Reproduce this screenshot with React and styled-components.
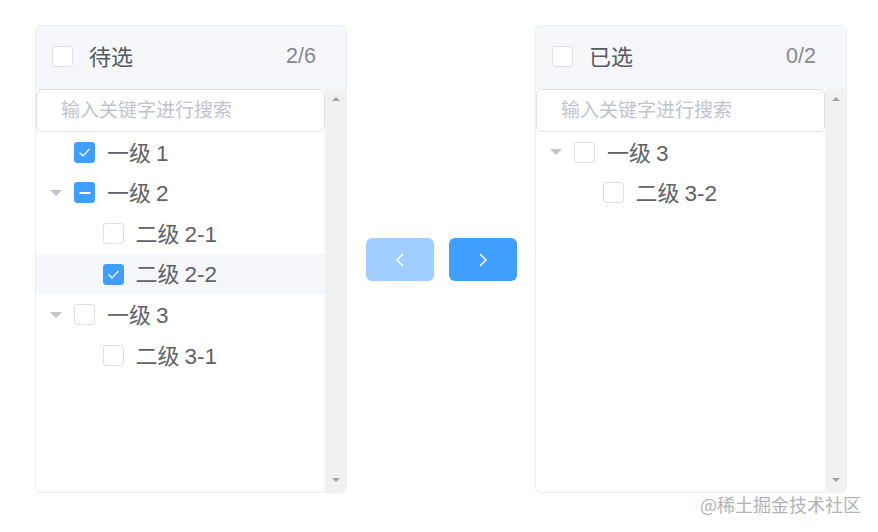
import React from "react";
import styled, { createGlobalStyle, css } from "styled-components";

const Global = createGlobalStyle`
  html, body { margin: 0; padding: 0; background: #ffffff; }
  body { font-family: "Liberation Sans", "Noto Sans CJK SC", sans-serif; }
  * { box-sizing: border-box; }
`;

const Page = styled.div`
  position: relative;
  width: 878px;
  height: 532px;
  padding: 25px 0 0 35px;
  display: flex;
  align-items: flex-start;
`;

const Panel = styled.div`
  width: 312px;
  height: 468px;
  border: 1px solid #ebeef5;
  border-radius: 6px;
  background: #fff;
  overflow: hidden;
  display: flex;
  flex-direction: column;
`;

const Header = styled.div`
  height: 63px;
  background: #f5f7fa;
  display: flex;
  align-items: center;
  padding: 0 30px 2px 16px;
  flex-shrink: 0;
`;

const HeaderTitle = styled.span`
  margin-left: 16px;
  font-size: 22px;
  line-height: 1;
  padding-bottom: 3px;
  color: #57595e;
  font-family: "Noto Sans CJK SC", sans-serif;
  flex: 1;
`;

const Count = styled.span`
  font-size: 21.5px;
  line-height: 1;
  color: #85888e;
  font-family: "Liberation Sans", sans-serif;
`;

const Body = styled.div`
  flex: 1;
  display: flex;
  min-height: 0;
`;

const Content = styled.div`
  flex: 1;
  display: flex;
  flex-direction: column;
`;

const Search = styled.div`
  height: 43px;
  border: 1px solid #dcdfe6;
  border-radius: 6px;
  display: flex;
  align-items: center;
  padding: 0 0 4px 24px;
  font-size: 19px;
  line-height: 1;
  color: #c0c4cc;
  font-family: "Noto Sans CJK SC", sans-serif;
  margin-right: 0;
`;

const Scrollbar = styled.div`
  width: 21px;
  background: #f1f1f1;
  display: flex;
  flex-direction: column;
  justify-content: space-between;
  align-items: center;
  padding: 8px 0 10px;
`;

const Arrow = styled.div`
  width: 0;
  height: 0;
  border-left: 4px solid transparent;
  border-right: 4px solid transparent;
  ${(p) =>
    p.$up
      ? css`border-bottom: 4px solid #a3a3a3;`
      : css`border-top: 4px solid #a3a3a3;`}
`;

const Row = styled.div`
  height: 40.6px;
  display: flex;
  align-items: center;
  padding-left: ${(p) => p.$level * 28.5}px;
  background: ${(p) => (p.$active ? "#f5f7fa" : "transparent")};
`;

const CaretBox = styled.div`
  width: 38px;
  height: 100%;
  display: flex;
  align-items: center;
  justify-content: center;
  flex-shrink: 0;
`;

const Caret = styled.div`
  width: 0;
  height: 0;
  border-left: 6px solid transparent;
  border-right: 6px solid transparent;
  border-top: 6px solid #c0c4cc;
  margin-left: 1px;
  visibility: ${(p) => (p.$hidden ? "hidden" : "visible")};
`;

const Box = styled.span`
  width: 21px;
  height: 21px;
  border-radius: 3px;
  flex-shrink: 0;
  display: inline-flex;
  align-items: center;
  justify-content: center;
  border: 1px solid ${(p) => (p.$on ? "#409eff" : "#dcdfe6")};
  background: ${(p) => (p.$on ? "#409eff" : "#fff")};
`;

const Label = styled.span`
  margin-left: 12px;
  font-size: 22px;
  line-height: 1;
  padding-top: 0;
  color: #606266;
  font-family: "Noto Sans CJK SC", sans-serif;
  white-space: nowrap;
  .num {
    font-family: "Liberation Sans", sans-serif;
    font-size: 22.5px;
  }
`;

const Buttons = styled.div`
  display: flex;
  gap: 15px;
  margin: 213px 18px 0 19px;
`;

const Btn = styled.button`
  width: 68px;
  height: 43px;
  border: none;
  border-radius: 6px;
  background: ${(p) => (p.$disabled ? "#a0cfff" : "#409eff")};
  display: flex;
  align-items: center;
  justify-content: center;
  padding: 0;
`;

const Watermark = styled.div`
  position: absolute;
  left: 700px;
  top: 494px;
  font-size: 18px;
  line-height: 1.2;
  color: #b3b3b3;
  font-family: "Noto Sans CJK SC", sans-serif;
`;

const Check = ({ state }) => (
  <Box $on={state !== "off"}>
    {state === "on" && (
      <svg width="15" height="13" viewBox="0 0 15 13">
        <path d="M2.5 6.5 L6 9.8 L12.5 3" fill="none" stroke="#fff" strokeWidth="1.2" />
      </svg>
    )}
    {state === "half" && (
      <svg width="12" height="4" viewBox="0 0 12 4">
        <rect x="0.5" y="1" width="11" height="2" fill="#fff" />
      </svg>
    )}
  </Box>
);

const Chevron = ({ dir }) => (
  <svg width="10" height="16" viewBox="0 0 10 16">
    <path
      d={dir === "left" ? "M8 2 L2 8 L8 14" : "M2 2 L8 8 L2 14"}
      fill="none"
      stroke="#fff"
      strokeWidth="1.5"
    />
  </svg>
);

const Text = ({ cn, num }) => (
  <Label>
    {cn} <span className="num">{num}</span>
  </Label>
);

const TreeRow = ({ level = 0, caret, state, cn, num, active }) => (
  <Row $level={level} $active={active}>
    <CaretBox>
      <Caret $hidden={level > 0 || !caret} />
    </CaretBox>
    <Check state={state} />
    <Text cn={cn} num={num} />
  </Row>
);

const TransferPanel = ({ title, count, rows }) => (
  <Panel>
    <Header>
      <Check state="off" />
      <HeaderTitle>{title}</HeaderTitle>
      <Count>{count}</Count>
    </Header>
    <Body>
      <Content>
        <Search>输入关键字进行搜索</Search>
        {rows.map((r, i) => (
          <TreeRow key={i} {...r} />
        ))}
      </Content>
      <Scrollbar>
        <Arrow $up />
        <Arrow />
      </Scrollbar>
    </Body>
  </Panel>
);

const leftRows = [
  { level: 0, caret: false, state: "on", cn: "一级", num: "1" },
  { level: 0, caret: true, state: "half", cn: "一级", num: "2" },
  { level: 1, state: "off", cn: "二级", num: "2-1" },
  { level: 1, state: "on", cn: "二级", num: "2-2", active: true },
  { level: 0, caret: true, state: "off", cn: "一级", num: "3" },
  { level: 1, state: "off", cn: "二级", num: "3-1" },
];

const rightRows = [
  { level: 0, caret: true, state: "off", cn: "一级", num: "3" },
  { level: 1, state: "off", cn: "二级", num: "3-2" },
];

export default function App() {
  return (
    <>
      <Global />
      <Page>
        <TransferPanel title="待选" count="2/6" rows={leftRows} />
        <Buttons>
          <Btn $disabled>
            <Chevron dir="left" />
          </Btn>
          <Btn>
            <Chevron dir="right" />
          </Btn>
        </Buttons>
        <TransferPanel title="已选" count="0/2" rows={rightRows} />
        <Watermark>@稀土掘金技术社区</Watermark>
      </Page>
    </>
  );
}
